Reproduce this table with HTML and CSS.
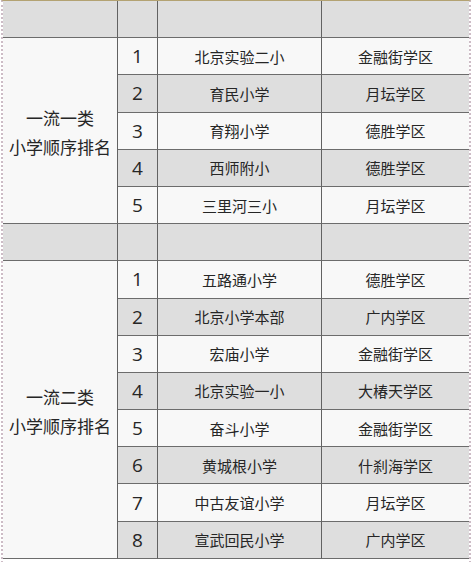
FILE: index.html
```html
<!DOCTYPE html>
<html lang="zh-CN">
<head>
<meta charset="utf-8">
<link rel="stylesheet" href="styles.css">
</head>
<body>
<div class="frame">
  <div class="grid">
    <div class="c gray"></div><div class="c gray"></div><div class="c gray"></div><div class="c gray last"></div>

    <div class="c group g1"><span>一流一类</span><span>小学顺序排名</span></div>
    <div class="c num">1</div><div class="c">北京实验二小</div><div class="c last">金融街学区</div>
    <div class="c num gray">2</div><div class="c gray">育民小学</div><div class="c gray last">月坛学区</div>
    <div class="c num">3</div><div class="c">育翔小学</div><div class="c last">德胜学区</div>
    <div class="c num gray">4</div><div class="c gray">西师附小</div><div class="c gray last">德胜学区</div>
    <div class="c num">5</div><div class="c">三里河三小</div><div class="c last">月坛学区</div>

    <div class="c gray"></div><div class="c gray"></div><div class="c gray"></div><div class="c gray last"></div>

    <div class="c group g2"><span>一流二类</span><span>小学顺序排名</span></div>
    <div class="c num">1</div><div class="c">五路通小学</div><div class="c last">德胜学区</div>
    <div class="c num gray">2</div><div class="c gray">北京小学本部</div><div class="c gray last">广内学区</div>
    <div class="c num">3</div><div class="c">宏庙小学</div><div class="c last">金融街学区</div>
    <div class="c num gray">4</div><div class="c gray">北京实验一小</div><div class="c gray last">大椿天学区</div>
    <div class="c num">5</div><div class="c">奋斗小学</div><div class="c last">金融街学区</div>
    <div class="c num gray">6</div><div class="c gray">黄城根小学</div><div class="c gray last">什刹海学区</div>
    <div class="c num">7</div><div class="c">中古友谊小学</div><div class="c last">月坛学区</div>
    <div class="c num gray">8</div><div class="c gray">宣武回民小学</div><div class="c gray last">广内学区</div>
  </div>
</div>
</body>
</html>
```

FILE: styles.css
```css
html, body {
  margin: 0;
  padding: 0;
  background: #ffffff;
}

.frame {
  margin-left: 1px;
  width: 466px;
  border-left: 2px dotted #cdbcc6;
  border-right: 2px dotted #cdbcc6;
  border-top: 1px solid #b3a272;
  padding-bottom: 4px;
}

.grid {
  display: grid;
  grid-template-columns: 115px 40px 164px 147px;
  grid-template-rows: repeat(15, 37.2px);
  font-family: "Noto Sans CJK SC", "Noto Sans", sans-serif;
  color: #262626;
}

.c {
  box-sizing: border-box;
  display: flex;
  align-items: center;
  justify-content: center;
  background: #f8f8f8;
  border-right: 1px solid #626262;
  border-bottom: 1px solid #6c6c6c;
  font-size: 15px;
}

.c.last {
  border-right: none;
}

.c.gray {
  background: #dedede;
}

.num {
  font-family: "Open Sans", "Liberation Sans", sans-serif;
  font-size: 19px;
}

.group {
  flex-direction: column;
  font-size: 17px;
  line-height: 29px;
  background: #f8f8f8;
  padding-top: 2px;
}

.g1 {
  grid-row: span 5;
}

.g2 {
  grid-row: span 8;
}
```
